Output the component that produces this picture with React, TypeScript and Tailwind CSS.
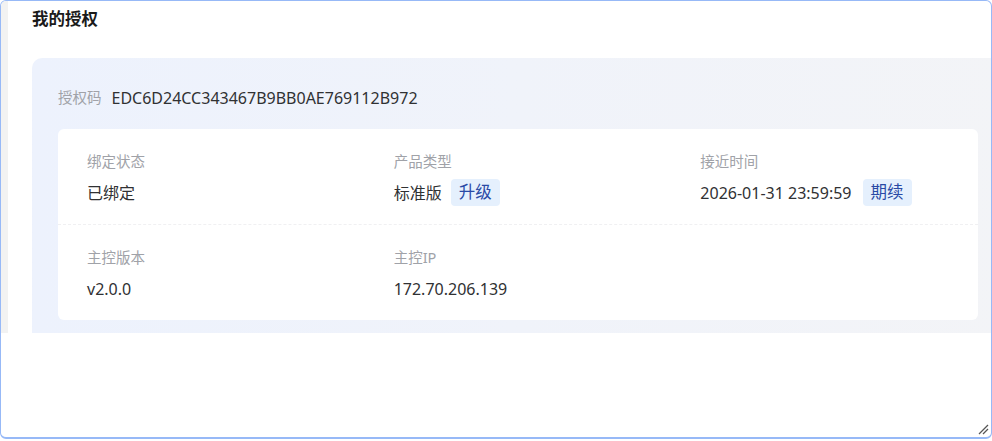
import React from "react";

const font = { fontFamily: '"Noto Sans", "Noto Sans CJK SC", sans-serif' };

function Field({ label, children }: { label: string; children: React.ReactNode }) {
  return (
    <div className="pl-[29px] pr-[30px] pt-[21px] pb-[18px]">
      <div className="h-[22px] leading-[22px] text-[14.5px] text-[#a0a2a8]">{label}</div>
      <div className="mt-[7px] h-[27px] flex items-center text-[16px] text-[#303133]">{children}</div>
    </div>
  );
}

function Badge({ children }: { children: React.ReactNode }) {
  return (
    <span className="inline-flex items-center h-[27px] px-2 rounded-[4px] bg-[#e5f0fd] text-[#2a4aa6] text-[16.5px]">
      {children}
    </span>
  );
}

export default function App() {
  return (
    <div className="w-[992px] h-[441px] bg-white" style={font}>
      <div className="relative w-[992px] h-[439px] border border-b-2 border-[#97b9f7] rounded-[6px] overflow-hidden bg-white">
        <div className="flex h-[332px] overflow-hidden">
          <div className="w-[7px] shrink-0 bg-[#f2f2f2]" />
          <div className="flex-1 min-w-0 pl-[24px]">
            <div className="h-[57px] pt-[6px] text-[16.5px] font-bold text-[#1a1a1a] leading-[24px]">我的授权</div>
            <div className="w-[972px] rounded-tl-[10px] rounded-tr-[10px] bg-gradient-to-r from-[#edf2fd] to-[#f3f4f7] px-[26px] pt-[28px] pb-[14px]">
              <div className="flex items-center h-[24px]">
                <span className="text-[14.5px] text-[#a0a2a8]">授权码</span>
                <span className="ml-[10px] text-[16px] text-[#303133]">EDC6D24CC343467B9BB0AE769112B972</span>
              </div>
              <div className="mt-[19px] bg-white rounded-[6px]">
                <div className="grid grid-cols-3">
                  <Field label="绑定状态">已绑定</Field>
                  <Field label="产品类型">
                    <span>标准版</span>
                    <span className="ml-[9px]"><Badge>升级</Badge></span>
                  </Field>
                  <Field label="接近时间">
                    <span>2026-01-31 23:59:59</span>
                    <span className="ml-[11px]"><Badge>期续</Badge></span>
                  </Field>
                </div>
                <div className="border-t border-dashed border-[#f0f0f2]" />
                <div className="grid grid-cols-3">
                  <Field label="主控版本">v2.0.0</Field>
                  <Field label="主控IP">172.70.206.139</Field>
                  <div />
                </div>
              </div>
            </div>
          </div>
        </div>
        <svg className="absolute right-[2px] bottom-[2px]" width="12" height="12" viewBox="0 0 12 12">
          <line x1="11" y1="2" x2="2" y2="11" stroke="#555" strokeWidth="1.2" />
          <line x1="11" y1="6" x2="6" y2="11" stroke="#555" strokeWidth="1.2" />
        </svg>
      </div>
    </div>
  );
}
